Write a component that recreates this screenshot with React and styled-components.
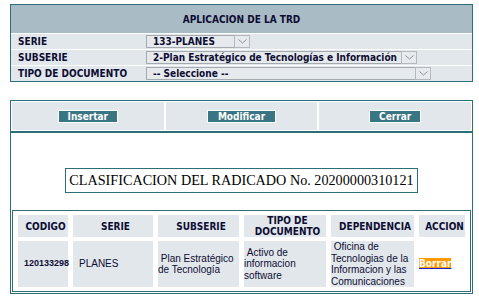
import styled, { createGlobalStyle } from 'styled-components';

const TEAL = '#2e6e79';
const ROW_BG = '#e2e7eb';
const INK = '#0d0d33';
const UI_FONT = '"DejaVu Sans Condensed", "DejaVu Sans", sans-serif';

const GlobalStyle = createGlobalStyle`
  *, *::before, *::after { box-sizing: border-box; }
  body {
    margin: 0;
    background: #fff;
    color: ${INK};
    font-family: ${UI_FONT};
  }
`;

const Page = styled.div`
  padding: 4px 0 0 10px;
  width: 473px;
`;

const FormPanel = styled.div`
  width: 463px;
  border: 1px solid ${TEAL};
  background: #fff;
`;

const PanelTitle = styled.div`
  height: 28px;
  display: flex;
  align-items: center;
  justify-content: center;
  background: #a9bbc5;
  font: bold 10px ${UI_FONT};
  font-stretch: semi-condensed;
`;

const FieldRow = styled.div`
  display: grid;
  grid-template-columns: 135px 1fr;
  align-items: center;
  height: 16px;
  border-top: 1px solid #fff;
  background: ${ROW_BG};
`;

const FieldLabel = styled.span`
  padding-left: 7px;
  font: bold 10px ${UI_FONT};
  font-stretch: semi-condensed;
`;

const Select = styled.div`
  width: ${p => p.$width}px;
  height: 13px;
  display: flex;
  align-items: center;
  border: 1px solid #a3aab0;
  background: #e6eaed;
`;

const SelectText = styled.span`
  flex: 1;
  padding-left: 6px;
  font: bold 10px ${UI_FONT};
  font-stretch: semi-condensed;
  line-height: 11px;
  white-space: nowrap;
  overflow: hidden;
`;

const SelectArrow = styled.span`
  width: 16px;
  height: 13px;
  margin-right: -1px;
  display: flex;
  align-items: center;
  justify-content: center;
  border: 1px solid #b4b9bd;
  background: #e8ebee;
`;

const ResultPanel = styled.div`
  width: 463px;
  margin-top: 18px;
  padding-bottom: 1px;
  border: 1px solid ${TEAL};
  background: #fff;
`;

const ActionBar = styled.div`
  display: grid;
  grid-template-columns: repeat(3, 1fr);
  gap: 2px;
  padding: 1px;
  border-bottom: 2px solid ${TEAL};
`;

const ActionCell = styled.div`
  height: 28px;
  display: flex;
  align-items: center;
  justify-content: center;
  background: ${ROW_BG};
`;

const Button = styled.button`
  height: 13px;
  padding: 0 ${p => p.$pad}px;
  border: 1px solid #fff;
  background: #3a7584;
  color: #fff;
  font: bold 10px ${UI_FONT};
  font-stretch: semi-condensed;
  line-height: 11px;
  cursor: pointer;
`;

const Caption = styled.div`
  display: flex;
  justify-content: center;
  margin-top: 35px;
`;

const CaptionBox = styled.div`
  padding: 3px 3px;
  border: 1px solid ${TEAL};
  font: 14.2px "Liberation Serif", serif;
  line-height: 17px;
  color: #000;
`;

const Grid = styled.table`
  width: 459px;
  margin: 17px 1px 0;
  table-layout: fixed;
  border: 1px solid ${TEAL};
  border-spacing: 5px 4px;
`;

const HeadCell = styled.th`
  width: ${p => p.$width}px;
  height: 22px;
  padding: 0 0 0 5px;
  background: ${ROW_BG};
  font: bold 10px ${UI_FONT};
  font-stretch: semi-condensed;
  line-height: 11px;
  text-align: center;
`;

const DataCell = styled.td`
  height: 45px;
  padding: 0;
  background: ${p => (p.$plain ? 'transparent' : ROW_BG)};
  font: ${p => (p.$bold ? 'bold 9px' : '10px')} "Liberation Sans", Arial, sans-serif;
  line-height: 11.5px;
  vertical-align: middle;
  padding-left: ${p => p.$indent || 0}px;
`;

const DeleteLink = styled.a`
  background: #ff9a00;
  color: #fff;
  font: bold 10px ${UI_FONT};
  font-stretch: semi-condensed;
  text-decoration: underline;
  text-decoration-color: #2323d0;
  cursor: pointer;
`;

const Chevron = () => (
  <svg width="9" height="5" viewBox="0 0 9 5">
    <polyline points="0.5,0.5 4.5,4 8.5,0.5" fill="none" stroke="#8a9298" strokeWidth="1" />
  </svg>
);

const fields = [
  { label: 'SERIE', value: '133-PLANES', width: 104 },
  { label: 'SUBSERIE', value: '2-Plan Estratégico de Tecnologías e Información', width: 271 },
  { label: 'TIPO DE DOCUMENTO', value: '-- Seleccione --', width: 285 },
];

const actions = [
  { label: 'Insertar', pad: 9 },
  { label: 'Modificar', pad: 10 },
  { label: 'Cerrar', pad: 9 },
];

const columns = [
  { title: 'CODIGO', width: 50 },
  { title: 'SERIE', width: 80 },
  { title: 'SUBSERIE', width: 81 },
  { title: 'TIPO DE DOCUMENTO', width: 82 },
  { title: 'DEPENDENCIA', width: 83 },
  { title: 'ACCION', width: 46 },
];

export default function App() {
  return (
    <Page>
      <GlobalStyle />
      <FormPanel>
        <PanelTitle>APLICACION DE LA TRD</PanelTitle>
        {fields.map(field => (
          <FieldRow key={field.label}>
            <FieldLabel>{field.label}</FieldLabel>
            <Select $width={field.width}>
              <SelectText>{field.value}</SelectText>
              <SelectArrow><Chevron /></SelectArrow>
            </Select>
          </FieldRow>
        ))}
      </FormPanel>

      <ResultPanel>
        <ActionBar>
          {actions.map(action => (
            <ActionCell key={action.label}>
              <Button $pad={action.pad}>{action.label}</Button>
            </ActionCell>
          ))}
        </ActionBar>

        <Caption>
          <CaptionBox>CLASIFICACION DEL RADICADO No. 20200000310121</CaptionBox>
        </Caption>

        <Grid>
          <thead>
            <tr>
              {columns.map(col => (
                <HeadCell key={col.title} $width={col.width}>{col.title}</HeadCell>
              ))}
            </tr>
          </thead>
          <tbody>
            <tr>
              <DataCell $bold $indent={6}>120133298</DataCell>
              <DataCell $indent={6}>PLANES</DataCell>
              <DataCell>{'\u00a0Plan Estratégico de Tecnología'}</DataCell>
              <DataCell>{'\u00a0Activo de informacion software'}</DataCell>
              <DataCell>{'\u00a0Oficina de Tecnologias de la Informacion y las Comunicaciones'}</DataCell>
              <DataCell $plain>
                <DeleteLink>Borrar</DeleteLink>
              </DataCell>
            </tr>
          </tbody>
        </Grid>
      </ResultPanel>
    </Page>
  );
}
